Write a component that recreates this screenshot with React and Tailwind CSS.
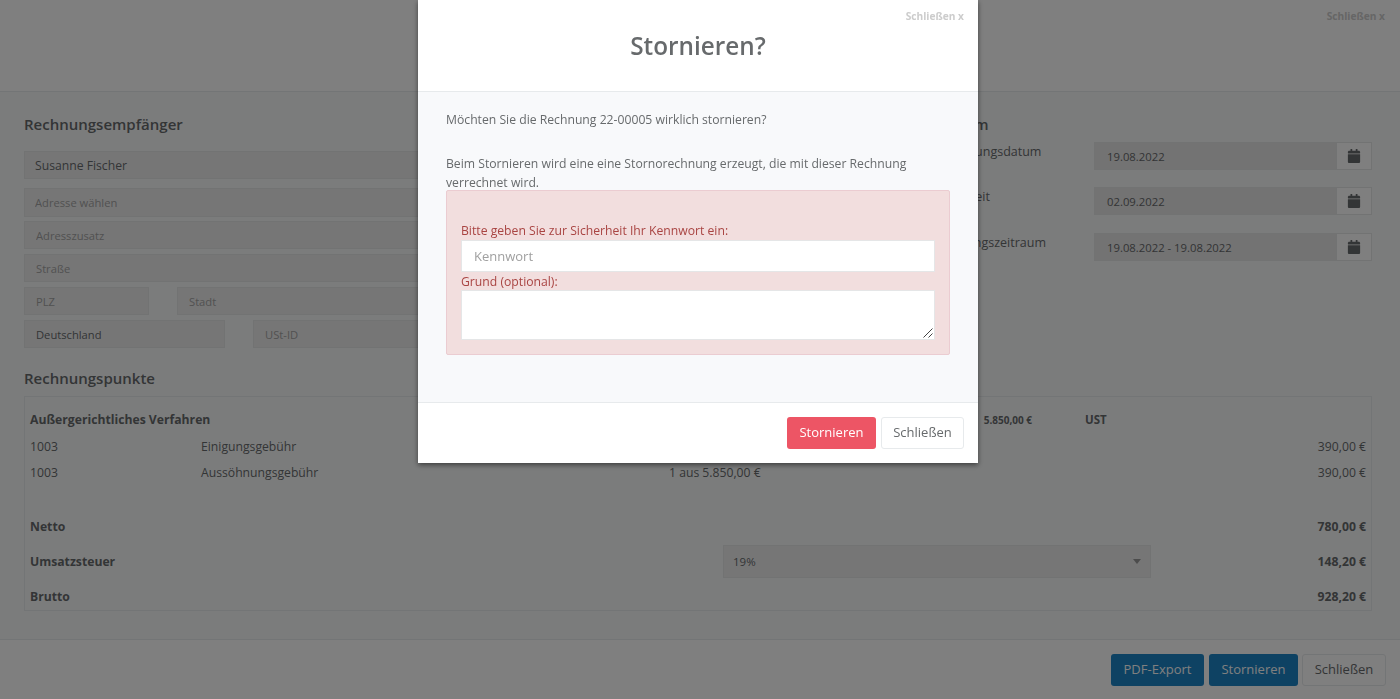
import React from 'react';
import { FaCalendar } from 'react-icons/fa';

function Field({ placeholder, value, className = '' }) {
  return (
    <input
      readOnly
      placeholder={placeholder}
      value={value || ''}
      className={`block h-[28px] min-w-0 border border-[#e5e6e7] bg-[#ededed] text-[11.2px] text-[#676a6c] placeholder:text-[#a3a3a3] outline-none ${className}`}
    />
  );
}

function DateRow({ label, value, className = '' }) {
  return (
    <div className={`flex ${className}`}>
      <div className="w-[155px] shrink-0 pt-[1px] text-[12.5px] leading-[18px] text-[#676a6c]">{label}</div>
      <div className="flex h-[28px] w-[278px] border border-[#e5e6e7]">
        <div className="flex-1 bg-[#e6e6e6] pl-[12px] text-[11.3px] leading-[27px] text-[#676a6c]">{value}</div>
        <div className="flex w-[35px] items-center justify-center border-l border-[#e5e6e7] bg-white">
          <FaCalendar className="text-[14px] text-[#676a6c]" />
        </div>
      </div>
    </div>
  );
}

function PositionRow({ nr, name, amount, total, height }) {
  return (
    <div className={`grid grid-cols-[171px_468px_1fr_auto] items-center ${height}`}>
      <div>{nr}</div>
      <div>{name}</div>
      <div>{amount}</div>
      <div>{total}</div>
    </div>
  );
}

function Page() {
  return (
    <div className="flex h-screen flex-col overflow-hidden bg-white font-['Open_Sans',sans-serif] text-[12.2px] text-[#676a6c]">
      <div className="h-[92px] shrink-0 border-b border-[#e7eaec] pr-[15px] pt-[9px] text-right text-[10.2px] leading-[14px] font-bold text-[#cccccc]">
        Schließen x
      </div>

      <div className="h-[548px] shrink-0 border-b border-[#e7eaec] bg-[#f7f9f9] pr-[28px] pl-[24px] pt-[22px]">
        <div className="flex justify-between">
          <div className="w-[680px]">
            <h2 className="text-[15px] leading-[20px] font-semibold">Rechnungsempfänger</h2>
            <Field value="Susanne Fischer" className="mt-[17px] w-full pl-[10px] text-[12.2px]" />
            <Field placeholder="Adresse wählen" className="mt-[9px] h-[29px] w-full pl-[10px]" />
            <Field placeholder="Adresszusatz" className="mt-[4px] w-full pl-[11px]" />
            <Field placeholder="Straße" className="mt-[5px] w-full pl-[11px]" />
            <div className="mt-[5px] flex gap-[28px]">
              <Field placeholder="PLZ" className="w-[125px] pl-[11px]" />
              <Field placeholder="Stadt" className="flex-1 pl-[11px]" />
            </div>
            <div className="mt-[5px] flex gap-[28px]">
              <Field value="Deutschland" className="w-[201px] pl-[11px]" />
              <Field placeholder="USt-ID" className="flex-1 pl-[11px]" />
            </div>
          </div>

          <div className="w-[433px] text-[#676a6c]">
            <h2 className="text-[15px] leading-[20px] font-semibold">Datum</h2>
            <DateRow label="Rechnungsdatum" value="19.08.2022" className="mt-[8px]" />
            <DateRow label="Fälligkeit" value="02.09.2022" className="mt-[17px]" />
            <DateRow label="Leistungszeitraum" value="19.08.2022 - 19.08.2022" className="mt-[18px]" />
          </div>
        </div>

        <h2 className="mt-[20px] text-[15px] leading-[20px] font-semibold">Rechnungspunkte</h2>
        <div className="mt-[8px] h-[215px] border border-[#e7eaec] px-[5px] pt-[10px]">
          <div className="grid h-[26px] grid-cols-[639px_416px_1fr] items-center font-bold">
            <div>Außergerichtliches Verfahren</div>
            <div className="pr-[53px] text-right text-[10px]">5.850,00 €</div>
            <div className="text-[11.5px]">UST</div>
          </div>
          <PositionRow nr="1003" name="Einigungsgebühr" amount="" total="390,00 €" height="h-[28px]" />
          <PositionRow nr="1003" name="Aussöhnungsgebühr" amount="1 aus 5.850,00 €" total="390,00 €" height="mt-[-1px] h-[26px]" />
          <div className="mt-[28px] flex h-[26px] items-center justify-between font-bold">
            <div>Netto</div>
            <div>780,00 €</div>
          </div>
          <div className="mt-[4px] grid h-[35px] grid-cols-[693px_428px_1fr] items-center font-bold">
            <div className="pt-[1px]">Umsatzsteuer</div>
            <div className="relative flex h-[33px] items-center border border-[#e5e6e7] bg-[#ededed] pl-[9px] text-[11.5px] font-normal">
              19%
              <div className="absolute top-[13px] right-[9px] h-0 w-0 border-x-[4px] border-t-[5px] border-x-transparent border-t-[#999999]" />
            </div>
            <div className="pt-[1px] text-right">148,20 €</div>
          </div>
          <div className="mt-[5px] flex h-[26px] items-center justify-between font-bold">
            <div>Brutto</div>
            <div>928,20 €</div>
          </div>
        </div>
      </div>

      <div className="flex flex-1 items-start justify-end gap-[4px] pt-[14px] pr-[14px]">
        <button className="mr-[1px] h-[32px] w-[93px] rounded-[3px] bg-[#1c84c6] text-[13px] text-white">PDF-Export</button>
        <button className="h-[32px] w-[89px] rounded-[3px] bg-[#1c84c6] text-[13px] text-white">Stornieren</button>
        <button className="h-[32px] w-[84px] rounded-[3px] border border-[#e7eaec] bg-white text-[13px] text-[#676a6c]">Schließen</button>
      </div>
    </div>
  );
}

function Modal() {
  return (
    <div className="fixed top-0 left-[418px] w-[560px] bg-white font-['Open_Sans',sans-serif] text-[#676a6c] shadow-[0_2px_5px_rgba(0,0,0,0.5)]">
      <div className="relative h-[92px] border-b border-[#e7eaec] pt-[29px] text-center">
        <div className="absolute top-[9px] right-[14px] text-[10.2px] leading-[14px] font-bold text-[#cccccc]">Schließen x</div>
        <h1 className="text-[24.3px] leading-[33px] font-semibold">Stornieren?</h1>
      </div>

      <div className="h-[310px] bg-[#f8f9fb] px-[28px] pt-[18px] text-[12.2px] leading-[19px]">
        <p>Möchten Sie die Rechnung 22-00005 wirklich stornieren?</p>
        <p className="mt-[25px]">Beim Stornieren wird eine eine Stornorechnung erzeugt, die mit dieser Rechnung verrechnet wird.</p>
        <div className="mt-[-2px] h-[165px] rounded-[2px] border border-[#ebccd1] bg-[#f2dede] px-[14px] pt-[31px] text-[#a94442]">
          <div className="leading-[18px]">Bitte geben Sie zur Sicherheit Ihr Kennwort ein:</div>
          <input
            placeholder="Kennwort"
            className="block h-[32px] w-full border border-[#e5e6e7] bg-white pl-[12px] text-[13px] outline-none placeholder:text-[#a0a0a0]"
          />
          <div className="h-[18px] leading-[20px]">Grund (optional):</div>
          <div className="relative">
            <textarea className="block h-[50px] w-full resize-none border border-[#e5e6e7] bg-white outline-none" />
            <svg className="pointer-events-none absolute right-[2px] bottom-[2px]" width="10" height="10" viewBox="0 0 10 10" stroke="#444444" fill="none">
              <path d="M0.5 9.5 L9.5 0.5" />
              <path d="M5.5 9.5 L9.5 5.5" />
            </svg>
          </div>
        </div>
      </div>

      <div className="flex h-[61px] items-start justify-end gap-[5px] border-t border-[#e7eaec] pt-[14px] pr-[14px]">
        <button className="h-[32px] w-[89px] rounded-[3px] bg-[#ed5565] text-[13px] text-white">Stornieren</button>
        <button className="h-[32px] w-[83px] rounded-[3px] border border-[#e7eaec] bg-white text-[13px] text-[#676a6c]">Schließen</button>
      </div>
    </div>
  );
}

export default function App() {
  return (
    <div>
      <Page />
      <div className="fixed inset-0 bg-black/50" />
      <Modal />
    </div>
  );
}
